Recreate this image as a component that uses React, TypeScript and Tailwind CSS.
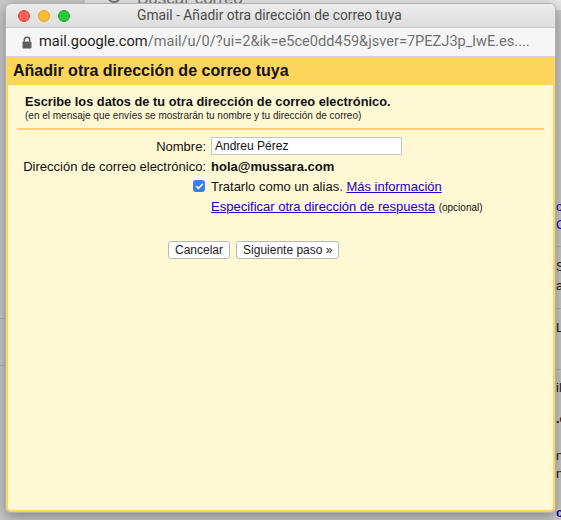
import { Check } from 'lucide-react'

const bgFragments = [
  { top: 199, text: 'c', className: 'text-[#1a0dab]' },
  { top: 217, text: 'G', className: 'text-[#1a0dab]' },
  { top: 259, text: 'S', className: 'text-[#222]' },
  { top: 278, text: 'ar', className: 'text-[#222]' },
  { top: 320, text: 'L', className: 'text-[#222]' },
  { top: 380, text: 'il', className: 'text-[#222]' },
  { top: 411, text: '.e', className: 'text-[#222] font-bold' },
  { top: 448, text: 'n', className: 'text-[#222]' },
  { top: 466, text: 'n', className: 'text-[#222]' },
  { top: 505, text: 'c', className: 'text-[#1a0dab] font-bold' },
]

function TrafficLights() {
  return (
    <div className="absolute left-[12px] top-[6px] flex gap-[8px]">
      <span className="w-[12px] h-[12px] rounded-full bg-[#fe5f57] border border-[#e0443e]" />
      <span className="w-[12px] h-[12px] rounded-full bg-[#febc2e] border border-[#dea123]" />
      <span className="w-[12px] h-[12px] rounded-full bg-[#28c840] border border-[#1aab29]" />
    </div>
  )
}

function Lock() {
  return (
    <svg width="10" height="13" viewBox="0 0 10 13" className="shrink-0">
      <path d="M2.3 5.5V3.9a2.7 2.7 0 0 1 5.4 0v1.6" fill="none" stroke="#5f5f5f" strokeWidth="1.5" />
      <rect x="0.5" y="5.5" width="9" height="7" rx="1" fill="#5f5f5f" />
    </svg>
  )
}

export default function App() {
  return (
    <div className="relative w-[561px] h-[520px] overflow-hidden bg-[#c9c9c9] font-['Liberation_Sans',Arial,sans-serif]">
      {/* gmail page behind the popup */}
      <div className="absolute left-[85px] top-0 w-[476px] h-[10px] bg-[#e6e6e6]">
        <div className="absolute left-[22px] -top-[11px] w-[14px] h-[14px] rounded-full border-2 border-[#777]" />
        <span className="absolute left-[52px] -top-[14px] text-[17px] text-[#777]">Buscar correo</span>
      </div>
      <div className="absolute left-0 top-[318px] w-[6px] h-px bg-[#b5b5b5]" />
      <div className="absolute left-0 top-[365px] w-[6px] h-px bg-[#b5b5b5]" />
      <div className="absolute left-[556px] top-[246px] w-[5px] h-px bg-[#b5b5b5]" />
      <div className="absolute left-[556px] top-[308px] w-[5px] h-px bg-[#b5b5b5]" />
      <div className="absolute left-[556px] top-[369px] w-[5px] h-px bg-[#b5b5b5]" />
      {bgFragments.map((f) => (
        <span
          key={f.top}
          className={`absolute left-[556px] text-[13px] leading-[15px] ${f.className}`}
          style={{ top: f.top }}
        >
          {f.text}
        </span>
      ))}

      {/* popup window */}
      <div className="absolute left-[5px] top-[3px] w-[551px] h-[510px] rounded-[6px] overflow-hidden flex flex-col border border-[#b1b1b1] shadow-[0_4px_14px_rgba(0,0,0,0.35)]">
        <div className="relative h-[24px] shrink-0 bg-gradient-to-b from-[#ececec] to-[#dedede] flex items-center pl-[131px] border-b border-[#c9c9c9]">
          <TrafficLights />
          <span className="text-[13.8px] text-[#4c4c4c] font-['Roboto',sans-serif] whitespace-nowrap">
            Gmail - Añadir otra dirección de correo tuya
          </span>
        </div>
        <div className="h-[29px] shrink-0 bg-[#f6f6f6] flex items-center gap-[7px] pl-[16px] border-b border-[#d4d4d4] whitespace-nowrap overflow-hidden">
          <Lock />
          <span className="text-[14.6px] font-['Roboto',sans-serif]">
            <span className="text-[#1e1e1e]">mail.google.com</span>
            <span className="text-[#717171]">/mail/u/0/?ui=2&amp;ik=e5ce0dd459&amp;jsver=7PEZJ3p_lwE.es....</span>
          </span>
        </div>

        <div className="flex-1 bg-[#fdd45c] px-[2px] pb-[2px] flex flex-col">
          <div className="h-[28px] shrink-0 flex items-center pl-[5px]">
            <h1 className="text-[16px] font-bold text-[#111]">Añadir otra dirección de correo tuya</h1>
          </div>
          <div className="flex-1 bg-[#fff8d5] rounded-b-[3px] px-[9px] pt-[9px]">
            <div className="pl-[8px]">
              <p className="text-[12.8px] font-bold text-[#111] leading-[16px]">
                Escribe los datos de tu otra dirección de correo electrónico.
              </p>
              <p className="text-[10px] text-[#222] leading-[12px]">
                (en el mensaje que envíes se mostrarán tu nombre y tu dirección de correo)
              </p>
            </div>
            <div className="mt-[6px] h-[2px] bg-[#fdd45c]" />

            <div className="mt-[6px] grid grid-cols-[189px_1fr] grid-rows-[20px_20px_20px_21px] gap-x-[5px] text-[13px] leading-[15px] text-[#111] items-center">
              <span className="text-right">Nombre:</span>
              <input
                defaultValue="Andreu Pérez"
                className="w-[191px] h-[18px] bg-white border border-[#c6c6c6] px-[3px] text-[12px] outline-none"
              />
              <span className="text-right">Dirección de correo electrónico:</span>
              <span className="font-bold">hola@mussara.com</span>
              <span className="flex justify-end pr-[1px]">
                <span className="w-[12px] h-[12px] rounded-[3px] bg-[#3b7ef0] flex items-center justify-center">
                  <Check size={9} strokeWidth={4} color="white" />
                </span>
              </span>
              <span>
                Tratarlo como un alias.{' '}
                <a className="text-[#2200cc] underline">Más información</a>
              </span>
              <span />
              <span>
                <a className="text-[#2200cc] underline">Especificar otra dirección de respuesta</a>{' '}
                <span className="text-[10px]">(opcional)</span>
              </span>
            </div>

            <div className="mt-[24px] flex gap-[6px] pl-[151px]">
              <button className="h-[18px] px-[6px] bg-white border border-[#b9b9b9] rounded-[3px] text-[12px] text-[#222] leading-none">
                Cancelar
              </button>
              <button className="h-[18px] px-[6px] bg-white border border-[#b9b9b9] rounded-[3px] text-[12px] text-[#222] leading-none">
                Siguiente paso »
              </button>
            </div>
          </div>
        </div>
      </div>
    </div>
  )
}
